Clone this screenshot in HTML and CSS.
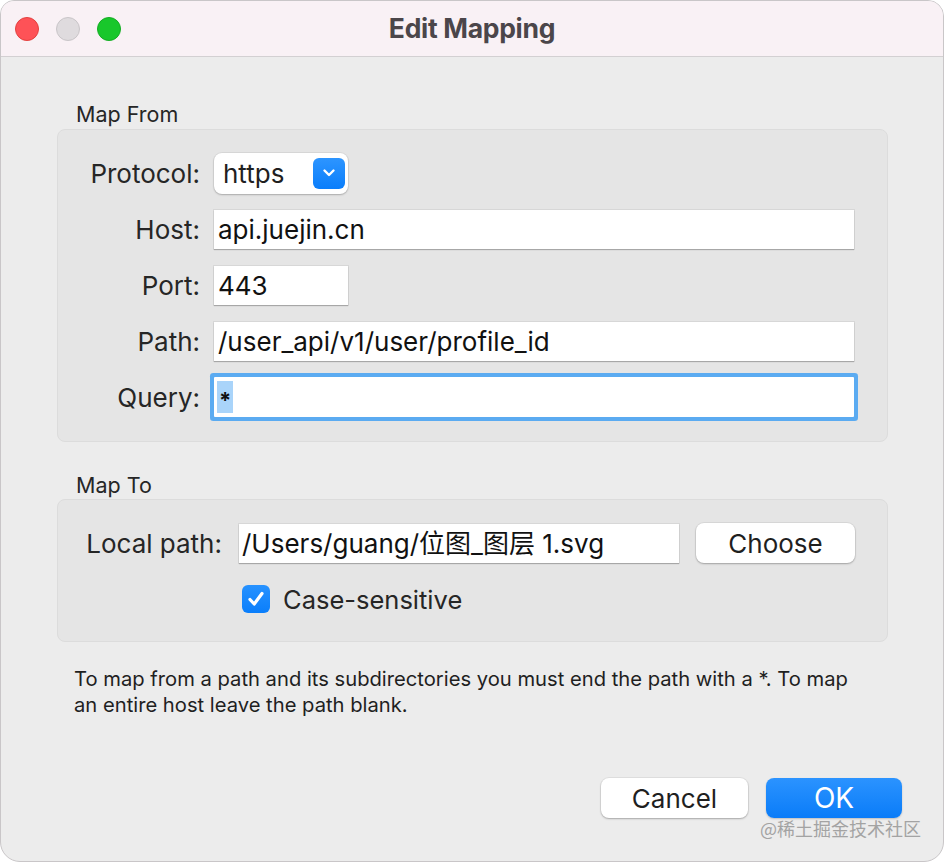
FILE: index.html
```html
<!DOCTYPE html>
<html>
<head>
<meta charset="utf-8">
<title>Edit Mapping</title>
<link rel="stylesheet" href="styles.css">
</head>
<body>
<div class="window">
  <div class="titlebar">
    <div class="lights">
      <span class="light red"></span>
      <span class="light gray"></span>
      <span class="light green"></span>
    </div>
    <div class="title">Edit Mapping</div>
  </div>
  <div class="content">
    <div class="section-label from-label">Map From</div>
    <div class="group group-from">
      <div class="row">
        <label class="lbl">Protocol:</label>
        <div class="popup">
          <span class="popup-text">https</span>
          <span class="popup-arrow">
            <svg width="16" height="12" viewBox="0 0 16 12"><path d="M3.5 3.5 L8 8 L12.5 3.5" fill="none" stroke="#fff" stroke-width="2.4" stroke-linecap="round" stroke-linejoin="round"/></svg>
          </span>
        </div>
      </div>
      <div class="row">
        <label class="lbl">Host:</label>
        <div class="field wide">api.juejin.cn</div>
      </div>
      <div class="row">
        <label class="lbl">Port:</label>
        <div class="field port">443</div>
      </div>
      <div class="row">
        <label class="lbl">Path:</label>
        <div class="field wide">/user_api/v1/user/profile_id</div>
      </div>
      <div class="row">
        <label class="lbl">Query:</label>
        <div class="field wide focused"><span class="sel">*</span></div>
      </div>
    </div>

    <div class="section-label to-label">Map To</div>
    <div class="group group-to">
      <div class="to-row">
        <label class="lbl">Local path:</label>
        <div class="field local">/Users/guang/位图_图层 1.svg</div>
        <button class="btn choose">Choose</button>
      </div>
      <div class="check-row">
        <span class="checkbox">
          <svg width="28" height="28" viewBox="0 0 28 28"><path d="M8 14.5 L12.2 19 L20 8.5" fill="none" stroke="#fff" stroke-width="3.2" stroke-linecap="round" stroke-linejoin="round"/></svg>
        </span>
        <span class="check-label">Case-sensitive</span>
      </div>
    </div>

    <p class="note">To map from a path and its subdirectories you must end the path with a *. To map an entire host leave the path blank.</p>

    <div class="buttons">
      <button class="btn cancel">Cancel</button>
      <button class="btn ok">OK</button>
    </div>
  </div>
  <div class="watermark">@稀土掘金技术社区</div>
</div>
</body>
</html>
```

FILE: styles.css
```css
* { box-sizing: border-box; }
html, body {
  margin: 0;
  padding: 0;
  background: #ffffff;
}
body {
  font-family: Inter, "Noto Sans CJK SC", sans-serif;
  color: #1f1f1f;
}
.window {
  position: relative;
  width: 944px;
  height: 862px;
  background: #ececec;
  border: 1px solid #c9c6c8;
  border-radius: 14px 16px 20px 20px;
  overflow: hidden;
  display: flex;
  flex-direction: column;
}
.titlebar {
  height: 56px;
  flex: none;
  background: #f9f1f5;
  border-bottom: 1px solid #d3d0d2;
  display: flex;
  align-items: center;
  position: relative;
}
.lights {
  display: flex;
  gap: 17px;
  padding-left: 14px;
}
.light {
  width: 24px;
  height: 24px;
  border-radius: 50%;
  display: block;
}
.red { background: #fe5257; border: 1px solid #e3413f; }
.gray { background: #dfdbde; border: 1px solid #c9c5c8; }
.green { background: #18c72b; border: 1px solid #14ad23; }
.title {
  position: absolute;
  left: 0;
  right: 0;
  top: 0;
  height: 54px;
  line-height: 54px;
  text-align: center;
  font-weight: 700;
  font-size: 26.5px;
  color: #4b464a;
  letter-spacing: -0.3px;
}
.content {
  flex: 1;
  padding: 0 55px 0 56px;
  display: flex;
  flex-direction: column;
}
.section-label {
  font-size: 21.5px;
  color: #262626;
  padding-left: 19px;
  height: 24px;
  line-height: 24px;
}
.from-label { margin-top: 45px; margin-bottom: 3px; }
.to-label { margin-top: 31px; margin-bottom: 2px; }
.group {
  background: #e5e5e5;
  border: 1px solid #dcdcdc;
  border-radius: 8px;
}
.group-from {
  height: 313px;
  padding: 15px 33px 15px 0;
}
.row {
  height: 56px;
  display: grid;
  grid-template-columns: 142px 1fr;
  column-gap: 14px;
  align-items: center;
}
.lbl {
  text-align: right;
  font-size: 26px;
  color: #262626;
}
.field {
  height: 39px;
  background: #ffffff;
  box-shadow: 0 0 0 1px rgba(0,0,0,0.06), 0 1px 1px rgba(0,0,0,0.22);
  font-size: 26px;
  line-height: 39px;
  padding-left: 4px;
  color: #111;
  white-space: nowrap;
  overflow: hidden;
}
.field.port { width: 134px; }
.field.focused {
  height: 40px;
  box-shadow: 0 0 0 4px #5babf1;
  border-radius: 1px;
  padding-left: 3px;
  display: flex;
  align-items: center;
}
.sel {
  display: inline-block;
  background: #a9d4fa;
  height: 32px;
  line-height: 38px;
  padding: 0 2px;
  font-weight: 700;
  font-size: 22px;
}
.popup {
  width: 134px;
  height: 41px;
  background: #fff;
  border-radius: 8px;
  box-shadow: 0 0 0 1px rgba(0,0,0,0.05), 0 1px 2px rgba(0,0,0,0.22);
  display: flex;
  align-items: center;
  justify-content: space-between;
  padding: 0 3px 0 9px;
}
.popup-text { font-size: 26px; color: #1f1f1f; }
.popup-arrow {
  width: 32px;
  height: 31px;
  border-radius: 6px;
  background: linear-gradient(#2d95ff, #0a7efb);
  display: flex;
  align-items: center;
  justify-content: center;
}
.popup-arrow svg { display: block; }
.group-to {
  height: 143px;
  padding: 15px 0 13px 0;
}
.to-row {
  height: 56px;
  display: grid;
  grid-template-columns: 164px 440px 159px;
  column-gap: 17px;
  align-items: center;
}
.field.local { font-size: 26px; padding-left: 3px; }
.btn {
  font-family: Inter, "Noto Sans CJK SC", sans-serif;
  border: none;
  border-radius: 8px;
  background: #fff;
  color: #1f1f1f;
  box-shadow: 0 0 0 1px rgba(0,0,0,0.05), 0 1px 2px rgba(0,0,0,0.25);
  font-size: 26px;
  height: 40px;
  padding: 0;
  cursor: default;
}
.choose { width: 159px; }
.check-row {
  height: 56px;
  display: flex;
  align-items: center;
  padding-left: 184px;
}
.checkbox {
  width: 28px;
  height: 28px;
  border-radius: 6px;
  background: linear-gradient(#2792ff, #0a7efb);
  display: block;
  margin-right: 13px;
}
.checkbox svg { display: block; }
.check-label { font-size: 25.5px; color: #262626; }
.note {
  margin: 24px 0 0 0;
  padding-left: 17px;
  padding-right: 30px;
  font-size: 20.2px;
  line-height: 26px;
  color: #1f1f1f;
}
.buttons {
  margin-top: 60px;
  display: flex;
  justify-content: flex-end;
  gap: 18px;
  margin-right: -14px;
}
.cancel { width: 147px; }
.ok {
  width: 136px;
  color: #fff;
  background: linear-gradient(#2b93ff, #0a7cf8);
  box-shadow: 0 1px 2px rgba(0,0,0,0.2);
  font-size: 28px;
}
.watermark {
  position: absolute;
  right: 22px;
  bottom: 20px;
  font-size: 18px;
  color: #a3a3a3;
  font-family: "Noto Sans CJK SC", sans-serif;
}
```
